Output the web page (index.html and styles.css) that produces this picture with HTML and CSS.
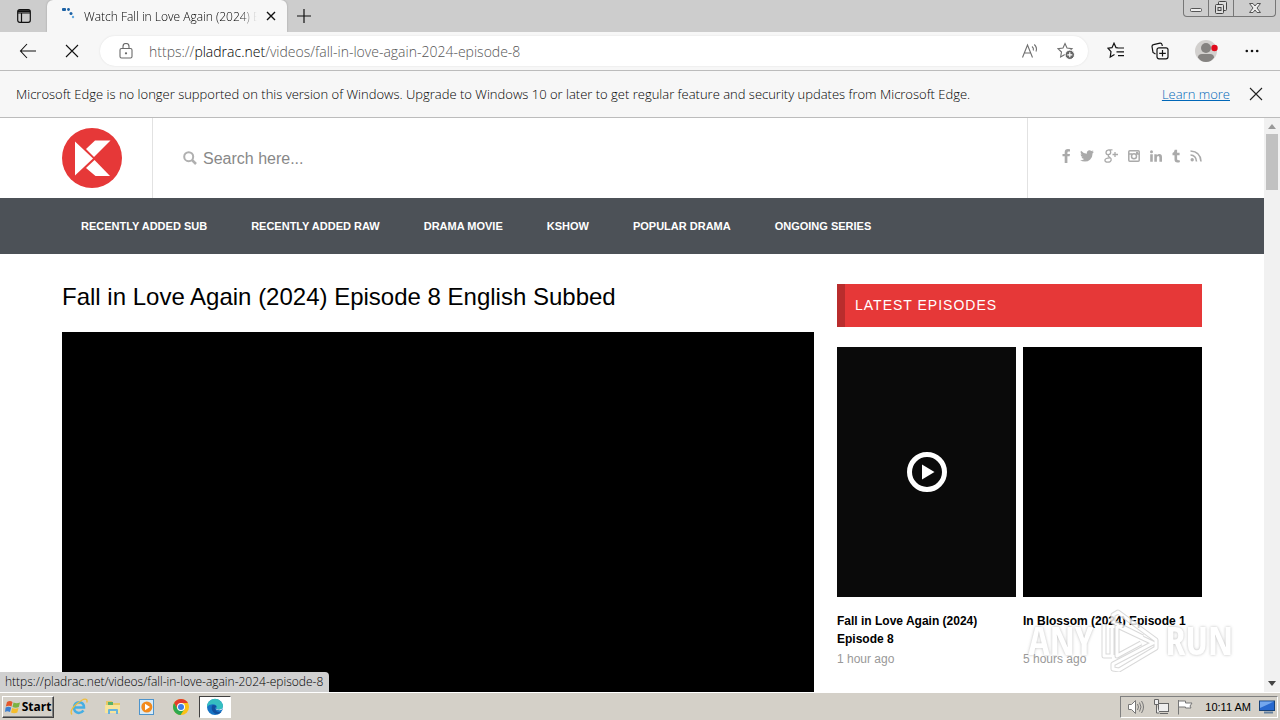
FILE: index.html
```html
<!DOCTYPE html>
<html lang="en">
<head>
    <meta charset="utf-8">
    <title>Fall in Love Again (2024) Episode 8 English Subbed</title>
    <link rel="stylesheet" href="styles.css">
</head>
<body>

<div class="tabstrip">
    <button class="tab-actions" aria-label="Tab actions">
        <svg width="16" height="16" viewBox="0 0 16 16" fill="none" stroke="#111" stroke-width="1.2"><rect x="1.7" y="1.7" width="12.6" height="12.6" rx="2"/><path d="M2 5h12M5.5 5v9" /><path d="M2 3.2h12" stroke-width="2"/></svg>
    </button>
    <div class="tab">
        <svg class="spinner" width="16" height="16" viewBox="0 0 16 16" fill="#1c62a5"><rect x="1" y="2" width="4" height="3" rx="1"/><circle cx="7.500" cy="3.500" r="1.400"/><circle cx="10" cy="7.500" r="1.500"/><circle cx="12" cy="11" r="1.200" fill="#63a8df"/></svg>
        <span class="tab-title">Watch Fall in Love Again (2024) Episode 8</span>
        <button class="tab-close" aria-label="Close tab">
            <svg width="10" height="10" viewBox="0 0 10 10" stroke="#111" stroke-width="1.4"><path d="M1 1l8 8M9 1l-8 8"/></svg>
        </button>
    </div>
    <button class="new-tab" aria-label="New tab">
        <svg width="14" height="14" viewBox="0 0 14 14" stroke="#111" stroke-width="1.2"><path d="M7 0v14M0 7h14"/></svg>
    </button>
    <div class="window-buttons">
        <button aria-label="Minimize"><svg width="14" height="14" viewBox="0 0 14 14" fill="#eee" stroke="#555"><rect x="1.5" y="7.5" width="11" height="3" rx="1"/></svg></button>
        <button aria-label="Restore"><svg width="14" height="14" viewBox="0 0 14 14" fill="#ddd" stroke="#444"><rect x="4.5" y=".5" width="8" height="9" rx="1"/><rect x="1.5" y="3.5" width="8" height="9" rx="1"/><rect x="4" y="6.500" width="3" height="3"/></svg></button>
        <button class="wide" aria-label="Close"><svg width="14" height="12" viewBox="0 0 14 12" fill="#eee" stroke="#555"><path d="M1.500 1.500h3.500l2 2.500 2-2.500h3.500L9 6l3.500 4.500H9L7 8l-2 2.500H1.500L5 6z"/></svg></button>
    </div>
</div>

<div class="toolbar">
    <button class="nav-button" aria-label="Back">
        <svg width="18" height="16" viewBox="0 0 18 16" fill="none" stroke="#111" stroke-width="1.1"><path d="M17 8H2M8 1L1.500 8 8 15"/></svg>
    </button>
    <button class="nav-button" aria-label="Stop">
        <svg width="14" height="14" viewBox="0 0 14 14" stroke="#111" stroke-width="1.1"><path d="M1 1l12 12M13 1L1 13"/></svg>
    </button>
    <div class="address">
        <svg width="14" height="16" viewBox="0 0 14 16" fill="none" stroke="#6b6b6b" stroke-width="1.1"><rect x="1" y="5.500" width="12" height="9.500" rx="1.500"/><path d="M4 5.500V3.500a3 3 0 0 1 6 0v2"/><circle cx="7" cy="10.300" r=".6" fill="#6b6b6b"/></svg>
        <a class="url" href="#">https://<b>pladrac.net</b>/videos/fall-in-love-again-2024-episode-8</a>
        <button aria-label="Read aloud">
            <svg width="18" height="16" viewBox="0 0 18 16" fill="none" stroke="#6f6f6f" stroke-width="1.1"><path d="M1.500 14.500L6.500 2l5 12.500M3.300 10h6.400M11 3.500q2 1.500 1.300 4M13.300 1.500q3.200 3 1.700 7"/></svg>
        </button>
        <button aria-label="Add to favorites">
            <svg width="18" height="18" viewBox="0 0 18 18"><path d="M8 1.500l2 4.500 5 .6-3.600 3.400.9 5L8 12.500l-4.400 2.500.9-5L1 6.600 6 6z" fill="none" stroke="#6f6f6f" stroke-width="1.100"/><circle cx="12.800" cy="12.800" r="4.700" fill="#666" stroke="#fff"/><path d="M12.800 10.300v5M10.300 12.800h5" stroke="#fff" stroke-width="1.200"/></svg>
        </button>
    </div>
    <div class="toolbar-icons">
        <button aria-label="Favorites">
            <svg width="18" height="18" viewBox="0 0 18 18" fill="none" stroke="#111" stroke-width="1.200"><path d="M11 5.800L9 5.600 7 1.200 5 5.700l-4 .5 3 3.400-.8 5.500 4.300-2.600M10.500 6h6.500M9.500 9.800H17M11 13.600h6"/></svg>
        </button>
        <button aria-label="Collections">
            <svg width="18" height="18" viewBox="0 0 18 18" fill="none" stroke="#111" stroke-width="1.200"><path d="M4.500 12L2 10.500 1 4.500Q1 3 2.500 2.700L9 1.200q1.700-.2 2 1.300l.3 1.500"/><rect x="6" y="5.800" width="11" height="11" rx="2"/><path d="M11.500 8v6.500M8.200 11.300h6.600"/></svg>
        </button>
        <button aria-label="Profile">
            <svg width="24" height="24" viewBox="0 0 24 24"><circle cx="12" cy="12" r="11" fill="#d2d0ce"/><circle cx="12" cy="9" r="5" fill="#858381"/><path d="M4 18.500Q4 15 8 15h8q4 0 4 3.500Q17 23 12 23t-8-4.500z" fill="#858381"/><circle cx="20.500" cy="9" r="3.200" fill="#e00b1c"/></svg>
        </button>
        <button aria-label="Settings and more">
            <svg width="14" height="14" viewBox="0 0 14 14" fill="#111"><circle cx="1.800" cy="7" r="1.300"/><circle cx="7" cy="7" r="1.300"/><circle cx="12.200" cy="7" r="1.300"/></svg>
        </button>
    </div>
</div>

<div class="infobar">
    <span>Microsoft Edge is no longer supported on this version of Windows. Upgrade to Windows 10 or later to get regular feature and security updates from Microsoft Edge.</span>
    <a href="#">Learn more</a>
    <button aria-label="Dismiss">
        <svg width="14" height="14" viewBox="0 0 14 14" stroke="#222" stroke-width="1.100"><path d="M1 1l12 12M13 1L1 13"/></svg>
    </button>
</div>

<div class="viewport">
    <div class="page">
        <header>
            <div class="container header-row">
                <a class="logo" href="#" aria-label="Home">
                    <svg width="60" height="60" viewBox="0 0 60 60"><circle cx="30" cy="30" r="30" fill="#e63838"/><path d="M13 13.500L31 30.500 13 47.500z" fill="#fff"/><path d="M33 12.500h15.500L32 29l-8-8z" fill="#fff"/><path d="M32.500 32L48 48H33.500L24 40z" fill="#fff"/></svg>
                </a>
                <form class="search">
                    <svg width="14" height="14" viewBox="0 0 14 14" fill="none" stroke="#b0b0b0" stroke-width="2"><circle cx="5.700" cy="5.700" r="4.500"/><path d="M9 9l4 4" stroke-width="2.500"/></svg>
                    <input type="text" placeholder="Search here..." aria-label="Search">
                </form>
                <div class="social">
                    <a href="#" aria-label="Facebook"><svg width="8" height="14" viewBox="0 0 8 14"><path d="M8 .3v2.200H6.600q-1.200 0-1.200 1.200V5H8l-.4 2.300H5.400V14H2.700V7.300H.5V5h2.200V3.300Q2.700.1 6 .1q1.300 0 2 .2z"/></svg></a>
                    <a href="#" aria-label="Twitter"><svg width="14" height="14" viewBox="0 0 14 14"><path d="M14 2.800q-.6.900-1.400 1.400.1 4-2.600 6.500Q7.800 12.600 5 12.600T0 11.300q2.400.2 4.200-1.200-1.900-.1-2.700-2h1.300Q.6 7.500.6 5.200l1.300.4Q-.1 4 1 1.700q2.400 2.900 5.900 3Q6.400 2.500 8.300 1.500q1.700-.7 3.200.6l1.800-.7q-.3 1-1.200 1.600.9-.1 1.900-.2z"/></svg></a>
                    <a href="#" aria-label="Google Plus"><svg width="14" height="14" viewBox="0 0 14 14" fill="none" stroke="#aaa" stroke-width="1.300"><path d="M8.500.8H4.800Q2 1.200 2 3.700q.2 2 2.300 2 2.400-.2 2.400-2.500Q6.500 1.500 5.400.9M4.400 6q-.6 1.300 1 2.100 2.200 1.200 1.800 3-.6 2.100-3.400 2.100-2.700 0-2.900-2 .2-2 4.800-2.300M11 3v5M8.500 5.500H14"/></svg></a>
                    <a href="#" aria-label="Instagram"><svg width="12" height="14" viewBox="0 0 12 14" fill="none" stroke="#aaa" stroke-width="1.500"><rect x=".8" y="1.800" width="10.400" height="10.400" rx="1"/><circle cx="6" cy="7.200" r="2.500"/><path d="M1 5h3M8 5h3M8 3.500h2" /></svg></a>
                    <a href="#" aria-label="LinkedIn"><svg width="12" height="14" viewBox="0 0 12 14"><circle cx="1.500" cy="2.700" r="1.500"/><path d="M.2 5.200h2.600v7.600H.2zM4.300 5.200h2.500v1.100q.9-1.300 2.500-1.300Q12 5 12 8.200v4.600H9.400V8.500q0-1.500-1.200-1.500-1.300 0-1.300 1.700v4.100H4.300z"/></svg></a>
                    <a href="#" aria-label="Tumblr"><svg width="8" height="14" viewBox="0 0 8 14"><path d="M2.700.8h2.400v3h2.500v2.400H5.100v3.600q0 1.500 1.300 1.500l1-.3.6 2q-1 .6-2.600.6-2.900 0-2.900-3V6.200H.5V4Q2.500 3.300 2.700.8z"/></svg></a>
                    <a href="#" aria-label="RSS"><svg width="12" height="14" viewBox="0 0 12 14" fill="none" stroke="#aaa" stroke-width="1.600"><circle cx="2.200" cy="10.800" r=".9" fill="#aaa"/><path d="M.5 6q5.500.2 6 6.500M.5 2q10 .5 10.500 10.500"/></svg></a>
                </div>
            </div>
        </header>

        <nav>
            <div class="container nav-row">
                <a href="#">RECENTLY ADDED SUB</a>
                <a href="#">RECENTLY ADDED RAW</a>
                <a href="#">DRAMA MOVIE</a>
                <a href="#">KSHOW</a>
                <a href="#">POPULAR DRAMA</a>
                <a href="#">ONGOING SERIES</a>
            </div>
        </nav>

        <div class="container content">
            <main>
                <h1>Fall in Love Again (2024) Episode 8 English Subbed</h1>
                <div class="player"></div>
            </main>
            <aside>
                <h2>LATEST EPISODES</h2>
                <div class="episodes">
                    <a class="episode" href="#">
                        <div class="thumb hovered">
                            <svg width="40" height="40" viewBox="0 0 40 40"><circle cx="20" cy="20" r="17.500" fill="none" stroke="#fff" stroke-width="5"/><path d="M15 12.500v15L27.500 20z" fill="#fff"/></svg>
                        </div>
                        <h3>Fall in Love Again (2024) Episode 8</h3>
                        <span>1 hour ago</span>
                    </a>
                    <a class="episode" href="#">
                        <div class="thumb"></div>
                        <h3>In Blossom (2024) Episode 1</h3>
                        <span>5 hours ago</span>
                    </a>
                </div>
            </aside>
        </div>
    </div>

    <div class="scrollbar">
        <svg width="8" height="5" viewBox="0 0 8 5" fill="#999"><path d="M0 5l4-5 4 5z"/></svg>
        <div class="thumb-bar"></div>
        <svg width="8" height="5" viewBox="0 0 8 5" fill="#444"><path d="M0 0l4 5 4-5z"/></svg>
    </div>

    <div class="status">https://pladrac.net/videos/fall-in-love-again-2024-episode-8</div>

    <div class="watermark">
        <span>ANY</span>
        <svg width="60" height="64" viewBox="0 0 60 64" fill="none" stroke-linejoin="round"><g stroke="#d0d0d0" stroke-width="5"><path d="M5 16v32h8M13 20v27M18 18v30l24-13M18 18l36 17-40 21v5l6 1 37-22v-8L19 4l-5 3v7l30 15"/></g><g stroke="#fff" stroke-width="3"><path d="M5 16v32h8M13 20v27M18 18v30l24-13M18 18l36 17-40 21v5l6 1 37-22v-8L19 4l-5 3v7l30 15"/></g></svg>
        <span>RUN</span>
    </div>
</div>

<div class="taskbar">
    <button class="start">
        <svg width="16" height="16" viewBox="0 0 16 16"><path d="M2 3q3-2 5.500 0L6.500 7.500Q4 6 .8 7.500z" fill="#e4572b"/><path d="M8.500 3.500q3 1.500 6.500 0L13.800 8q-3 1.500-6.300 0z" fill="#7bb342"/><path d="M.6 8.500q3-1.500 5.600 0L5 13q-3-1.500-5 0z" fill="#3c7fd0"/><path d="M7.200 9q3 1.500 6.300 0l-1.200 4.500q-3 1.500-6.300 0z" fill="#f5bd2c"/></svg>
        Start
    </button>
    <button class="task" aria-label="Internet Explorer">
        <svg width="18" height="18" viewBox="0 0 18 18" fill="none"><path d="M13.500 12.500Q11.500 15 8.800 15 4 14.500 4 9.500 4.500 4.500 9 4.200q5 .2 5 5.300H5" stroke="#45aee3" stroke-width="2.500"/><path d="M2 16.500Q-1 13 6 6.500 14-.5 16.500 1.500q1 1 .2 3" stroke="#efbd3b" stroke-width="1.300"/></svg>
    </button>
    <button class="task" aria-label="Explorer">
        <svg width="18" height="18" viewBox="0 0 18 18"><path d="M2 3h6l1 2h7v9H2z" fill="#e8c865"/><path d="M4 4h5v5H4z" fill="#58b06a"/><path d="M1 7h15v8H1z" fill="#f7e49b"/><path d="M4 16v-4q0-1 1-1h8q1 0 1 1v4h-2v-3H6v3z" fill="#67b3dc"/></svg>
    </button>
    <button class="task" aria-label="Media Player">
        <svg width="18" height="18" viewBox="0 0 18 18"><rect x="1.500" y="1.500" width="14" height="15" fill="#d9ebf7" stroke="#4d94cc"/><circle cx="8.800" cy="9" r="5.500" fill="#f28a1c"/><path d="M7 5.800v6.400L12 9z" fill="#fff"/></svg>
    </button>
    <button class="task" aria-label="Chrome">
        <svg width="18" height="18" viewBox="0 0 18 18"><circle cx="9" cy="9" r="8" fill="#fbc116"/><path d="M2.100 5A8 8 0 0 1 15.900 5H9L5.500 11z" fill="#e33b2e"/><path d="M2.100 5A8 8 0 0 0 8.500 17l4-6L9 12 5.500 11z" fill="#2da94f"/><circle cx="9" cy="9" r="4" fill="#fff"/><circle cx="9" cy="9" r="3" fill="#3d7de8"/></svg>
    </button>
    <button class="task active" aria-label="Edge">
        <svg width="18" height="18" viewBox="0 0 18 18"><circle cx="9" cy="9" r="8" fill="#1673c4"/><path d="M1 9A8 8 0 0 1 17 8.500Q16.500 12 12.500 11.500 9.500 11.200 10.700 9 10.500 6 6.500 6.200 2.500 6.500 1 9z" fill="#35bfc0"/><path d="M6 7.500Q4.500 13 9 15.500q3.500 1.500 6.500-1.500-5 1-6.300-3Q8.500 9 10.500 8.500 8.500 6 6 7.500z" fill="#124f9c"/><path d="M17 9q0 3-3.500 3.200Q10 12 9.500 10.500q2 1.500 4.500 1t3-2.500z" fill="#fff"/></svg>
    </button>
    <div class="tray">
        <svg width="18" height="16" viewBox="0 0 18 16" fill="#fff" stroke="#777"><path d="M1.500 5.500h3l4-4v13l-4-4h-3z"/><path d="M10.500 5q2 3 0 6M12.500 3.500q3 4.500 0 9M14.500 2q4 6 0 12" fill="none"/></svg>
        <svg width="16" height="16" viewBox="0 0 16 16" fill="#eee" stroke="#666"><rect x="5.500" y="4.500" width="10" height="8"/><path d="M7 14.500h8M1.500.5v5h4v-5zM3.500 6v8h3"/></svg>
        <svg width="16" height="16" viewBox="0 0 16 16" fill="#fff" stroke="#777"><path d="M1.500 1v14.500M1.500 2h7v2h6.500l-2 3 1 2H8.500V8h-7z"/></svg>
        <time>10:11 AM</time>
        <svg width="16" height="14" viewBox="0 0 16 14"><rect x=".5" y="1" width="15" height="9.500" fill="#2869cf" stroke="#174279"/><path d="M1 1.500h14L1 8z" fill="#73a7ee"/><path d="M5 12.500h9" stroke="#64809e" stroke-width="2"/></svg>
    </div>
</div>

</body>
</html>
```
FILE: styles.css
```css
* {
    box-sizing: border-box;
}
body {
    margin: 0;
    height: 100vh;
    display: flex;
    flex-direction: column;
    overflow: hidden;
    font-family: "Open Sans", "Noto Sans", sans-serif;
    font-size: 13px;
    font-weight: 300;
    color: #000;
    background: #fff;
}
button {
    display: flex;
    align-items: center;
    justify-content: center;
    padding: 0;
    border: none;
    background: none;
    font-family: inherit;
}
a {
    color: inherit;
    text-decoration: none;
}
svg {
    display: block;
    flex-shrink: 0;
}

/* browser chrome */
.tabstrip {
    display: flex;
    align-items: center;
    height: 32px;
    background: #cdcdcd;
}
.tab-actions {
    width: 47px;
}
.tab {
    display: flex;
    align-items: center;
    width: 240px;
    height: 32px;
    padding: 0 10px 0 14px;
    background: #f7f7f7;
    border-radius: 6px 6px 0 0;
    box-shadow: 0 0 2px #999;
}
.spinner {
    margin-right: 7px;
    margin-bottom: 4px;
}
.tab-title {
    flex: 1;
    overflow: hidden;
    white-space: nowrap;
    font-size: 12px;
    mask-image: linear-gradient(to right, #000 90%, transparent);
}
.tab-close {
    margin-left: 8px;
    width: 12px;
}
.new-tab {
    width: 34px;
}
.window-buttons {
    display: flex;
    align-self: flex-start;
    margin-left: auto;
    margin-right: 4px;
    border: 1px solid #777;
    border-top: none;
    border-radius: 0 0 4px 4px;
}
.window-buttons button {
    width: 25px;
    height: 16px;
    border-right: 1px solid #777;
}
.window-buttons .wide {
    width: 41px;
    border-right: none;
}
.toolbar {
    display: flex;
    align-items: center;
    height: 39px;
    padding: 0 18px 0 6px;
    background: #f7f7f7;
    border-bottom: 1px solid #bcbcbc;
}
.nav-button {
    width: 44px;
}
.address {
    flex: 1;
    display: flex;
    align-items: center;
    height: 30px;
    margin-left: 6px;
    padding: 0 13px 0 19px;
    gap: 18px;
    background: #fff;
    border-radius: 15px;
    box-shadow: 0 0 2px #ddd;
}
.url {
    flex: 1;
    margin-left: -2px;
    font-size: 14px;
    color: #555;
}
.url b {
    font-weight: inherit;
    color: #000;
}
.toolbar-icons {
    display: flex;
    align-items: center;
    gap: 24px;
    margin-left: 18px;
}
.toolbar-icons button {
    min-width: 20px;
}
.infobar {
    display: flex;
    align-items: center;
    height: 47px;
    padding: 0 17px 0 16px;
    background: #f7f7f7;
    border-bottom: 1px solid #bcbcbc;
    white-space: nowrap;
}
.infobar a {
    margin-left: auto;
    margin-right: 19px;
    color: #0067b8;
    text-decoration: underline;
}

/* site */
.viewport {
    position: relative;
    flex: 1;
    min-height: 0;
    display: flex;
    font-family: "Liberation Sans", Arial, sans-serif;
}
.page {
    flex: 1;
    overflow: hidden;
}
.container {
    max-width: 1140px;
    margin: 0 auto;
}
.header-row {
    display: flex;
    height: 80px;
}
.logo {
    display: flex;
    align-items: center;
    padding-right: 30px;
}
.search {
    flex: 1;
    display: flex;
    align-items: center;
    gap: 6px;
    padding: 0 30px;
    border-left: 1px solid #e2e2e2;
    border-right: 1px solid #e2e2e2;
}
.search input {
    flex: 1;
    padding: 2px 0 0;
    border: none;
    outline: none;
    font-family: inherit;
    font-size: 16px;
}
.search input::placeholder {
    color: #888;
}
.social {
    display: flex;
    align-items: center;
    justify-content: space-between;
    width: 174px;
    padding: 0 0 4px 34px;
}
.social svg {
    fill: #aaa;
}
.social svg[fill="none"] {
    fill: none;
}
nav {
    background: #4c5157;
}
.nav-row {
    display: flex;
    gap: 44px;
    height: 56px;
    padding: 0 19px;
    align-items: center;
    font-size: 11px;
    font-weight: bold;
    color: #fff;
}
.content {
    display: flex;
    gap: 23px;
    padding-top: 30px;
}
main {
    flex: 1;
}
h1 {
    margin: 0 0 22px;
    font-size: 24px;
    line-height: 26px;
    font-weight: 400;
}
.player {
    aspect-ratio: 16 / 9;
    background: #000;
}
aside {
    width: 365px;
}
h2 {
    margin: 0 0 20px;
    padding-left: 10px;
    border-left: 8px solid #b92d2d;
    background: #e63838;
    color: #fff;
    font-size: 14px;
    line-height: 43px;
    font-weight: 400;
    letter-spacing: 1px;
}
.episodes {
    display: grid;
    grid-template-columns: 1fr 1fr;
    gap: 7px;
}
.thumb {
    display: flex;
    align-items: center;
    justify-content: center;
    height: 250px;
    background: #000;
}
.hovered {
    background: #0a0a0a;
}
h3 {
    min-height: 36px;
    margin: 15px 0 2px;
    font-size: 12px;
    line-height: 18px;
}
.episode span {
    font-size: 12px;
    line-height: 18px;
    color: #999;
}

.scrollbar {
    display: flex;
    flex-direction: column;
    align-items: center;
    width: 16px;
    padding: 6px 0;
    background: #f1f1f1;
}
.thumb-bar {
    width: 12px;
    height: 56px;
    margin-top: 5px;
    margin-bottom: auto;
    background: #c1c1c1;
}
.status {
    position: absolute;
    left: 0;
    bottom: 0;
    padding: 0 6px 0 5px;
    background: #d0d0d0;
    border-radius: 0 4px 0 0;
    font-family: "Open Sans", "Noto Sans", sans-serif;
    font-size: 12px;
    line-height: 20px;
}
.watermark {
    position: absolute;
    right: 47px;
    bottom: 20px;
    display: flex;
    align-items: center;
    gap: 6px;
    font-family: "Open Sans Condensed", "Roboto Condensed", sans-serif;
    font-size: 40px;
    font-weight: bold;
    line-height: 64px;
    color: #fff;
    text-shadow: 0 0 3px #aaa;
    opacity: 0.8;
}

/* desktop taskbar */
.taskbar {
    display: flex;
    align-items: center;
    height: 28px;
    padding: 0 2px;
    background: #d4d0c8;
    border-top: 1px solid #fff;
}
.start {
    width: 52px;
    height: 22px;
    margin-right: 9px;
    gap: 1px;
    border: 1px solid;
    border-color: #fff #404040 #404040 #fff;
    box-shadow: inset -1px -1px #808080;
    font-size: 12px;
    font-weight: bold;
}
.task {
    width: 32px;
    height: 22px;
    margin-right: 2px;
}
.task.active {
    background: #fff;
    border: 1px solid;
    border-color: #404040 #fff #fff #404040;
}
.tray {
    display: flex;
    align-items: center;
    height: 22px;
    margin-left: auto;
    padding: 0 2px 0 6px;
    gap: 8px;
    border: 1px solid;
    border-color: #808080 #fff #fff #808080;
}
.tray time {
    margin-left: 4px;
    font-family: "Liberation Sans", Arial, sans-serif;
    font-size: 11px;
    font-weight: 400;
}
```
